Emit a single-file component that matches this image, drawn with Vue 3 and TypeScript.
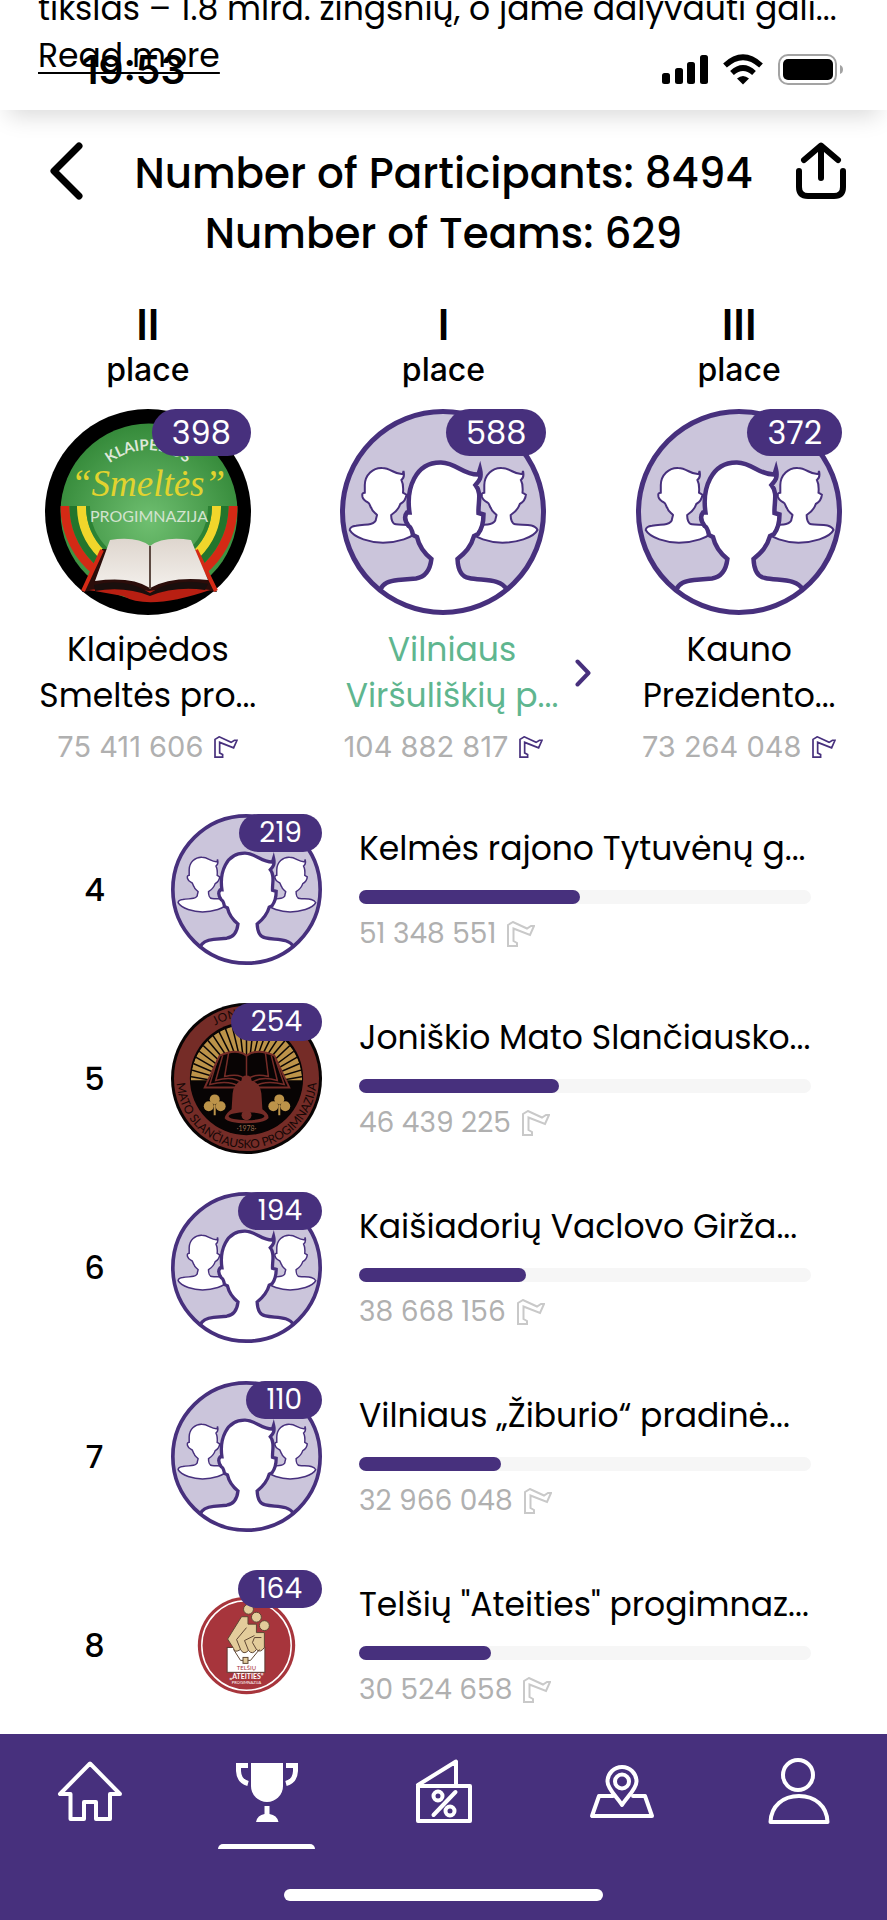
<script setup lang="ts">
type Logo = 'team' | 'smeltes' | 'joniskis' | 'telsiai'

interface Team {
  place: string
  name: string[]
  members: number
  steps: number
  logo: Logo
  own?: boolean
}

const participants = 8494
const teamCount = 629

const podium: Team[] = [
  { place: 'II', name: ['Klaipėdos', 'Smeltės pro...'], members: 398, steps: 75411606, logo: 'smeltes' },
  { place: 'I', name: ['Vilniaus', 'Viršuliškių p...'], members: 588, steps: 104882817, logo: 'team', own: true },
  { place: 'III', name: ['Kauno', 'Prezidento...'], members: 372, steps: 73264048, logo: 'team' },
]

const ranking: Team[] = [
  { place: '4', name: ['Kelmės rajono Tytuvėnų g...'], members: 219, steps: 51348551, logo: 'team' },
  { place: '5', name: ['Joniškio Mato Slančiausko...'], members: 254, steps: 46439225, logo: 'joniskis' },
  { place: '6', name: ['Kaišiadorių Vaclovo Girža...'], members: 194, steps: 38668156, logo: 'team' },
  { place: '7', name: ['Vilniaus „Žiburio“ pradinė...'], members: 110, steps: 32966048, logo: 'team' },
  { place: '8', name: ['Telšių "Ateities" progimnaz...'], members: 164, steps: 30524658, logo: 'telsiai' },
]

const best = Math.max(...podium.map((t) => t.steps))
const share = (steps: number): number => Math.round((steps / best) * 1000) / 10
const spaced = (n: number): string => String(n).replace(/\B(?=(\d{3})+$)/g, ' ')

const rays = Array.from({ length: 27 }, (_, i) => {
  const a = Math.PI * (1 + (i + 0.5) / 27)
  return { x: 76 + 64 * Math.cos(a), y: 84 + 64 * Math.sin(a) }
})
</script>

<template>
  <div class="app">
    <svg class="defs" aria-hidden="true">
      <defs>
        <clipPath id="disc"><circle cx="103" cy="103" r="102" /></clipPath>
        <clipPath id="sun"><path d="M20 78 A56 56 0 0 1 132 78 Z" /></clipPath>
        <radialGradient id="green" cx="50%" cy="55%" r="55%">
          <stop offset="0" stop-color="#6fbf70" />
          <stop offset="1" stop-color="#358a3a" />
        </radialGradient>
        <linearGradient id="page" x1="0" x2="0" y1="0" y2="1">
          <stop offset="0" stop-color="#ded6ce" />
          <stop offset="1" stop-color="#f3efeb" />
        </linearGradient>
        <path id="person" d="M9.7 121 C10 118 13 117 16 116.700 C22 115.500 27 116 30.600 115 C34 114 36 112 36 110 L37 106 C34 103 32 102 31.400 99 C30 98 30 94 28 93.500 C25 92 23 90 22.500 88 C22 85 22 84 24.800 83.700 V76 C25 66 33 58.500 42.200 59 C51 59 55 66 62.800 65 L63.500 62 C64.500 66 64 69 61.400 71 C63 74 63.500 78 63 83.700 L66.400 85.700 C66 90 64 93 60.300 95 C59 99 56 103 51.200 106 C51 110 52.500 115 56 115.300 C63 116.500 75 114 78 121 C74 129 56 133.700 43 133.700 C31 133.700 14 129 9.700 121 Z" />
        <symbol id="logo-team" viewBox="0 0 206 206">
          <circle cx="103" cy="103" r="101" fill="#cbc5db" />
          <g fill="#fff" stroke="#47307d" stroke-width="2">
            <use href="#person" />
            <use href="#person" x="119.500" />
          </g>
          <g clip-path="url(#disc)">
            <path d="M40 181 C43 174 49 172 58 171 L76 169.500 C85 168 90 162 91.400 150 C84 144 79 137 77 128 L73 126 C72 121 71 118 68.600 117 C65 112 64 107 67 103.500 H69.500 C66 80 75 53 101 53.500 C117 54 123 66 138.500 65.500 L140 60.500 C142 69 139 72 135.500 76 C142 84 138 93 138.500 104 L143.500 105.500 C143.500 114 141 121 138 125 L134 127 C131 138 125 144 117.500 150 C118 161 122 168 129 169 C142 172 161 169 167 181 L160 220 H46 Z" fill="#fff" stroke="#47307d" stroke-width="4.500" />
          </g>
          <circle cx="103" cy="103" r="100.500" fill="none" stroke="#47307d" stroke-width="5" />
        </symbol>
      </defs>
    </svg>

    <section class="intro">
      <p class="intro-text">tikslas – 1.8 mlrd. žingsnių, o jame dalyvauti gali...</p>
      <a class="read-more" href="#more">Read more</a>
      <div class="status">
        <span class="clock">19:53</span>
        <svg class="signals" viewBox="0 0 184 32" aria-hidden="true">
          <rect x="0" y="19" width="8" height="11" rx="2.500" />
          <rect x="13" y="14" width="8" height="16" rx="2.500" />
          <rect x="25" y="8" width="8" height="22" rx="2.500" />
          <rect x="38" y="1" width="8" height="29" rx="2.500" />
          <g fill="none" stroke="#000" stroke-width="5.500">
            <path d="M63 11.500 Q81 -5 99 11.500" />
            <path d="M70 19 Q81 9 92 19" />
          </g>
          <path d="M75 24.500 Q81 19.500 87 24.500 L81 30.500 Z" />
          <rect x="117" y="1" width="57" height="29" rx="9" fill="none" stroke="#a3a3a3" stroke-width="2" />
          <rect x="121" y="5" width="50" height="21" rx="5" />
          <path d="M178 11 Q181 12 181 15.500 T178 20 Z" fill="#a3a3a3" />
        </svg>
      </div>
    </section>

    <header class="head">
      <button class="icon-button" type="button" aria-label="Back">
        <svg class="back" viewBox="0 0 34 58"><path d="M30 4 L5 29 L30 54" /></svg>
      </button>
      <h1 class="totals">
        <span>Number of Participants: {{ participants }}</span>
        <span>Number of Teams: {{ teamCount }}</span>
      </h1>
      <button class="icon-button" type="button" aria-label="Share">
        <svg class="share" viewBox="0 0 52 58">
          <path d="M26 36 V4 M9 18 L26 3.500 L43 18" />
          <path d="M4 29 V45 Q4 54 13 54 H39 Q48 54 48 45 V29" />
        </svg>
      </button>
    </header>

    <ol class="podium">
      <li v-for="team in podium" :key="team.place" class="winner" :class="{ own: team.own }">
        <span class="numeral">{{ team.place }}</span>
        <span class="place-word">place</span>
        <div class="avatar large">
          <svg v-if="team.logo === 'team'" class="logo"><use href="#logo-team" /></svg>
          <svg v-else class="logo" viewBox="0 0 206 206">
            <circle cx="103" cy="103" r="103" fill="#000" />
            <circle cx="104" cy="103" r="88.500" fill="url(#green)" />
            <g fill="none">
              <path d="M20 97 A84 84 0 0 0 188 97" stroke="#d42a15" stroke-width="9" />
              <path d="M28.500 97 A75.500 75.500 0 0 0 179.500 97" stroke="#23752c" stroke-width="8" />
              <path d="M36.500 97 A67.500 67.500 0 0 0 171.500 97" stroke="#f1d62b" stroke-width="9" />
              <path d="M43 97 A61 61 0 0 0 165 97" stroke="#2c8234" stroke-width="4" />
              <path id="arc-klaipeda" d="M41 103 A62 62 0 0 1 165 103" />
            </g>
            <text class="arc-name"><textPath href="#arc-klaipeda" startOffset="50%">KLAIPĖDOS</textPath></text>
            <text class="script" x="103" y="87">“Smeltės”</text>
            <text class="kind" x="104" y="113">PROGIMNAZIJA</text>
            <path d="M57 140 L37 183 Q70 178 104 191 Q140 178 172 183 L150 140 Z" fill="#2b0d0a" />
            <path d="M57 141 L38 182 M151 141 L171 182" stroke="#d42a15" stroke-width="4" fill="none" />
            <path d="M44 181 Q75 176 104 182 Q135 176 165 181 Q104 202 78 187 Z" fill="#b81f12" />
            <path d="M49 176 Q80 168 105 184 Q130 168 163 175 L160 181 Q130 177 105 187 Q80 177 50 182 Z" fill="#1a0f0d" />
            <path d="M65 131 Q92 127 105 137 V179 Q86 167 50 172 Z" fill="url(#page)" />
            <path d="M146 131 Q118 127 105 137 V179 Q126 167 163 171 Z" fill="url(#page)" />
            <path d="M105 137 V180" stroke="#5d4a42" stroke-width="2" />
          </svg>
          <span class="badge">{{ team.members }}</span>
        </div>
        <div class="title-row">
          <span class="team-name"><span v-for="line in team.name" :key="line">{{ line }}</span></span>
          <a v-if="team.own" class="open" href="#team" aria-label="Open team">
            <svg viewBox="0 0 16 28"><path d="M2.500 2.500 L13.500 14 L2.500 25.500" /></svg>
          </a>
        </div>
        <span class="steps">
          {{ spaced(team.steps) }}
          <svg class="leg" viewBox="0 0 28 26"><path d="M1 4 L6 1 L20 7.500 L24 5 H27 L23 14 L6.500 7.500 V20 L10 22 V25 H1 Z" /></svg>
        </span>
      </li>
    </ol>

    <ol class="ranking">
      <li v-for="team in ranking" :key="team.place" class="row">
        <span class="rank">{{ team.place }}</span>
        <div class="avatar small">
          <svg v-if="team.logo === 'team'" class="logo"><use href="#logo-team" /></svg>
          <svg v-else-if="team.logo === 'joniskis'" class="logo" viewBox="0 0 152 152">
            <circle cx="76" cy="76" r="76" fill="#080404" />
            <circle cx="76" cy="76" r="73" fill="#752c27" />
            <circle cx="76" cy="76" r="57" fill="#080404" />
            <g clip-path="url(#sun)">
              <circle cx="76" cy="78" r="56" fill="#bc9349" />
              <line v-for="(ray, i) in rays" :key="i" x1="76" y1="84" :x2="ray.x" :y2="ray.y" stroke="#080404" stroke-width="1.500" />
            </g>
            <path d="M34 85 L49 53 Q66 45 76 53 Q87 45 104 53 L119 85 Z" fill="#080404" stroke="#752c27" stroke-width="2" />
            <g fill="none" stroke="#752c27" stroke-width="1.500">
              <path d="M76 53 V76 M58 50 L54 74 Q70 70 76 78 M95 50 L98 74 Q83 70 76 78" />
              <path d="M52 53 L45 78 Q63 73 72 81 M101 53 L107 78 Q90 73 80 81" />
              <path d="M47 56 L39 82 Q58 77 69 84 M105 56 L114 82 Q95 77 84 84" />
            </g>
            <path d="M76 73 Q81 73 81 78 Q90 81 91 91 L92 107 Q99 112 98 116 Q94 121 76 121 Q58 121 54 116 Q55 111 61 107 L62 91 Q63 81 71 78 Q71 73 76 73 Z" fill="#752c27" />
            <ellipse cx="76" cy="114" rx="18" ry="4" fill="#080404" />
            <circle cx="76" cy="113" r="5" fill="#752c27" />
            <g v-for="x in [44, 109]" :key="x" fill="#bc9349">
              <circle :cx="x" cy="97" r="5" />
              <circle :cx="x - 6" cy="104" r="5" />
              <circle :cx="x + 6" cy="104" r="5" />
              <rect :x="x - 1" y="102" width="2" height="11" />
            </g>
            <path id="arc-top" d="M14 76 A62 62 0 0 1 138 76" fill="none" />
            <path id="arc-bottom" d="M8 57 A70.500 70.500 0 1 0 144 57" fill="none" />
            <text class="ring-text"><textPath href="#arc-top" startOffset="47%">JONIŠKIO</textPath></text>
            <text class="ring-text"><textPath href="#arc-bottom" startOffset="50%">MATO SLANČIAUSKO PROGIMNAZIJA</textPath></text>
            <text class="year" x="76" y="129">·1978·</text>
          </svg>
          <svg v-else class="logo" viewBox="0 0 152 152">
            <circle cx="76" cy="76" r="49" fill="#a7353c" />
            <circle cx="76" cy="76" r="45" fill="none" stroke="#fff" stroke-width="1.500" />
            <rect x="56.500" y="78" width="38" height="25" fill="#fff" stroke="#5e3a32" />
            <g fill="#e3cc9b" stroke="#5e4632" stroke-width="1">
              <path d="M71 47 H77.500 V54.500 H86 V63 H94 V78 Q90 84 86 80 Q82 86 78 81 Q73 86 70 80 Q64 84 63 79 L57 69.500 Z" />
              <circle cx="78" cy="39.500" r="5" />
              <circle cx="86" cy="47.500" r="5" />
              <circle cx="94" cy="56" r="5" />
              <path d="M76 58 L66 70 L70 80 M84 66 L74 71 L78 81 M91 68 H84 L82 73 L86 80" fill="none" />
              <path d="M63 80 L70 91 H80 L89 80" fill="none" />
              <rect x="72.500" y="88" width="5" height="6" />
            </g>
            <text class="telsiai red" x="76" y="101">TELŠIŲ</text>
            <text class="telsiai bold" x="76" y="110">„ATEITIES”</text>
            <text class="telsiai tiny" x="76" y="115">PROGIMNAZIJA</text>
          </svg>
          <span class="badge">{{ team.members }}</span>
        </div>
        <div class="details">
          <span class="team-name">{{ team.name[0] }}</span>
          <div class="track" role="progressbar" :aria-valuenow="share(team.steps)" aria-valuemin="0" aria-valuemax="100" :aria-label="team.name[0]">
            <div class="fill" :style="{ width: share(team.steps) + '%' }"></div>
          </div>
          <span class="steps">
            {{ spaced(team.steps) }}
            <svg class="leg" viewBox="0 0 28 26"><path d="M1 4 L6 1 L20 7.500 L24 5 H27 L23 14 L6.500 7.500 V20 L10 22 V25 H1 Z" /></svg>
          </span>
        </div>
      </li>
    </ol>

    <footer class="bottom">
      <nav class="tabs">
        <a class="tab" href="#home" aria-label="Home">
          <svg viewBox="0 0 72 72"><path d="M37 8.500 L7 39 H17.500 V64 H31 V47 H43 V64 H57 V39 H67 Z" /></svg>
        </a>
        <a class="tab active" href="#challenges" aria-label="Challenges" aria-current="page">
          <svg viewBox="0 0 72 72">
            <g class="solid">
              <path d="M21 8 H53 V31 A16 16 0 0 1 21 31 Z" />
              <path d="M34.500 51 H39.500 V59 Q47 60 48.500 67 H26 Q27.500 60 34.500 59 Z" />
            </g>
            <path class="handle" d="M18 10.500 H8.500 V16 Q9 26 18 28.500 M56 10.500 H65.500 V16 Q65 26 56 28.500" />
          </svg>
        </a>
        <a class="tab" href="#offers" aria-label="Offers">
          <svg viewBox="0 0 72 72">
            <path d="M11 31 H63 V66 H11 Z M11 30 L49 6.500 V30" />
            <circle cx="31" cy="41" r="4.500" />
            <circle cx="43" cy="56" r="4.500" />
            <path d="M26.500 60 L48.500 37" />
          </svg>
        </a>
        <a class="tab" href="#map" aria-label="Map">
          <svg viewBox="0 0 72 72">
            <path d="M37 50 C32 42 22.500 34 22.500 26.500 A14.500 14.500 0 0 1 51.500 26.500 C51.500 34 42 42 37 50 Z" />
            <circle cx="37" cy="26.500" r="7" />
            <path d="M28 41 H14 L7 61 H67 L60 41 H48" />
          </svg>
        </a>
        <a class="tab" href="#profile" aria-label="Profile">
          <svg viewBox="0 0 72 72">
            <circle cx="36" cy="20" r="15" />
            <path d="M8.500 67 C9 51 21 41 37 41 S65 51 65.500 67 Z" />
          </svg>
        </a>
      </nav>
      <div class="home-indicator"></div>
    </footer>
  </div>
</template>

<style>
body {
  margin: 0;
  background: #fff;
}
</style>

<style scoped>
.app {
  display: flex;
  flex-direction: column;
  min-height: 100vh;
  overflow: hidden;
  background: #fff;
  color: #000;
  font-family: Poppins, Inter, "Open Sans", sans-serif;
}

.defs {
  position: absolute;
  width: 0;
  height: 0;
}

/* Scrolled intro text with the system status row on top of it */
.intro {
  position: relative;
  display: flex;
  flex-direction: column;
  justify-content: flex-end;
  align-items: flex-start;
  box-sizing: border-box;
  height: 110px;
  padding: 0 38px 31px;
  font-size: 33px;
  line-height: 47px;
  box-shadow: 0 14px 22px -8px rgba(0, 0, 0, 0.15);
}

.intro-text {
  margin: 0;
  white-space: nowrap;
}

.read-more {
  color: inherit;
  text-decoration-thickness: 2px;
  text-underline-offset: 5px;
  text-decoration-skip-ink: none;
}

.status {
  position: absolute;
  inset: 46px 41px auto 82px;
  display: flex;
  justify-content: space-between;
  align-items: center;
}

.clock {
  font-family: Inter, sans-serif;
  font-size: 39px;
  font-weight: 600;
  line-height: 48px;
}

.signals {
  width: 184px;
  height: 32px;
}

.head {
  display: grid;
  grid-template-columns: 52px 1fr 52px;
  align-items: start;
  padding: 32px 40px 0;
}

.icon-button {
  padding: 0;
  border: 0;
  background: none;
  line-height: 0;
}

.icon-button svg {
  height: 58px;
  fill: none;
  stroke: #000;
  stroke-width: 6;
  stroke-linecap: round;
  stroke-linejoin: round;
}

.icon-button .back {
  width: 34px;
  stroke-width: 7;
}

.share {
  width: 52px;
}

.totals {
  display: flex;
  flex-direction: column;
  align-items: center;
  margin: 0;
  padding-top: 2px;
  font-size: 42px;
  font-weight: 500;
  line-height: 60px;
  white-space: nowrap;
}

.podium,
.ranking {
  margin: 0;
  padding: 0;
  list-style: none;
}

.podium {
  display: grid;
  grid-template-columns: repeat(3, 1fr);
  padding-top: 36px;
}

.winner {
  display: flex;
  flex-direction: column;
  align-items: center;
}

.numeral,
.place-word {
  font-family: Inter, sans-serif;
}

.numeral {
  font-size: 42px;
  font-weight: 600;
  line-height: 50px;
}

.place-word {
  font-size: 32px;
  font-weight: 500;
  line-height: 40px;
}

.avatar {
  position: relative;
}

.avatar.large {
  width: 206px;
  height: 206px;
  margin-top: 19px;
}

.avatar.small {
  width: 151px;
  height: 151px;
}

.logo {
  display: block;
  width: 100%;
  height: 100%;
}

.badge {
  position: absolute;
  top: 0;
  right: 0;
  padding: 0 20px;
  border-radius: 24px;
  background: #47307d;
  color: #fff;
}

.large .badge {
  font-size: 32px;
  line-height: 47px;
}

.small .badge {
  font-size: 28px;
  line-height: 38px;
}

.title-row {
  display: grid;
  grid-template-columns: 16px 1fr 16px;
  align-items: center;
  align-self: stretch;
  margin-top: 12px;
}

.own .title-row {
  grid-template-columns: 33px 1fr 16px;
}

.title-row .team-name {
  grid-column: 2;
  display: flex;
  flex-direction: column;
  align-items: center;
}

.team-name {
  font-size: 33px;
  line-height: 46px;
  white-space: nowrap;
}

.own .team-name {
  color: #5fb68f;
}

.open {
  line-height: 0;
}

.open svg {
  width: 16px;
  height: 28px;
  fill: none;
  stroke: #47307d;
  stroke-width: 4;
  stroke-linecap: round;
  stroke-linejoin: round;
}

.steps {
  display: flex;
  align-items: center;
  gap: 11px;
  color: #b0b0b0;
  font-size: 28px;
  line-height: 40px;
  white-space: nowrap;
}

.winner .steps {
  margin-top: 8px;
  font-family: Inter, sans-serif;
  font-size: 29px;
}

.leg {
  width: 28px;
  height: 26px;
  fill: none;
  stroke: #c9c9c9;
  stroke-width: 2;
}

.winner .leg {
  width: 24px;
  height: 22px;
  stroke: #47307d;
}

.ranking {
  display: flex;
  flex-direction: column;
  gap: 38px;
  padding: 47px 76px 12px 18px;
}

.row {
  display: grid;
  grid-template-columns: 153px 151px 1fr;
  align-items: center;
}

.rank {
  text-align: center;
  font-size: 32px;
  font-weight: 500;
}

.details {
  display: flex;
  flex-direction: column;
  min-width: 0;
  padding-left: 37px;
}

.track {
  height: 14px;
  margin: 18px 0 10px;
  border-radius: 7px;
  background: #f6f6f6;
}

.fill {
  height: 100%;
  border-radius: 7px;
  background: #47307d;
}

.bottom {
  display: flex;
  flex-direction: column;
  align-items: center;
  margin-top: auto;
  padding-bottom: 19px;
  background: #47307d;
}

.tabs {
  display: grid;
  grid-template-columns: repeat(5, 1fr);
  align-self: stretch;
  padding-top: 21px;
}

.tab {
  display: flex;
  flex-direction: column;
  align-items: center;
  gap: 17px;
}

.tab::after {
  content: "";
  width: 97px;
  height: 5px;
  border-radius: 5px 5px 0 0;
}

.tab.active::after {
  background: #fff;
}

.tab svg {
  width: 72px;
  height: 72px;
  fill: none;
  stroke: #fff;
  stroke-width: 4;
  stroke-linejoin: round;
  stroke-linecap: round;
}

.tab .solid {
  fill: #fff;
  stroke: none;
}

.tab .handle {
  stroke-width: 5;
  stroke-linecap: butt;
  stroke-linejoin: miter;
}

.home-indicator {
  width: 36%;
  height: 12px;
  margin-top: 40px;
  border-radius: 6px;
  background: #fff;
}

/* Lettering inside the school emblems */
.arc-name,
.script,
.kind,
.ring-text,
.year,
.telsiai {
  font-family: Lato, sans-serif;
  text-anchor: middle;
}

.arc-name {
  fill: #dfe8da;
  font-size: 15px;
  font-weight: 700;
}

.script {
  fill: #e2d32f;
  font-family: "Liberation Serif", serif;
  font-size: 37px;
  font-style: italic;
}

.kind {
  fill: #d3e3cf;
  font-size: 16px;
}

.ring-text {
  fill: #140706;
  font-size: 12px;
}

.year {
  fill: #9b6b4c;
  font-size: 7px;
}

.telsiai {
  fill: #fff;
}

.red {
  fill: #a7353c;
  font-size: 6px;
}

.bold {
  font-size: 7px;
  font-weight: 700;
}

.tiny {
  font-size: 4px;
}
</style>
